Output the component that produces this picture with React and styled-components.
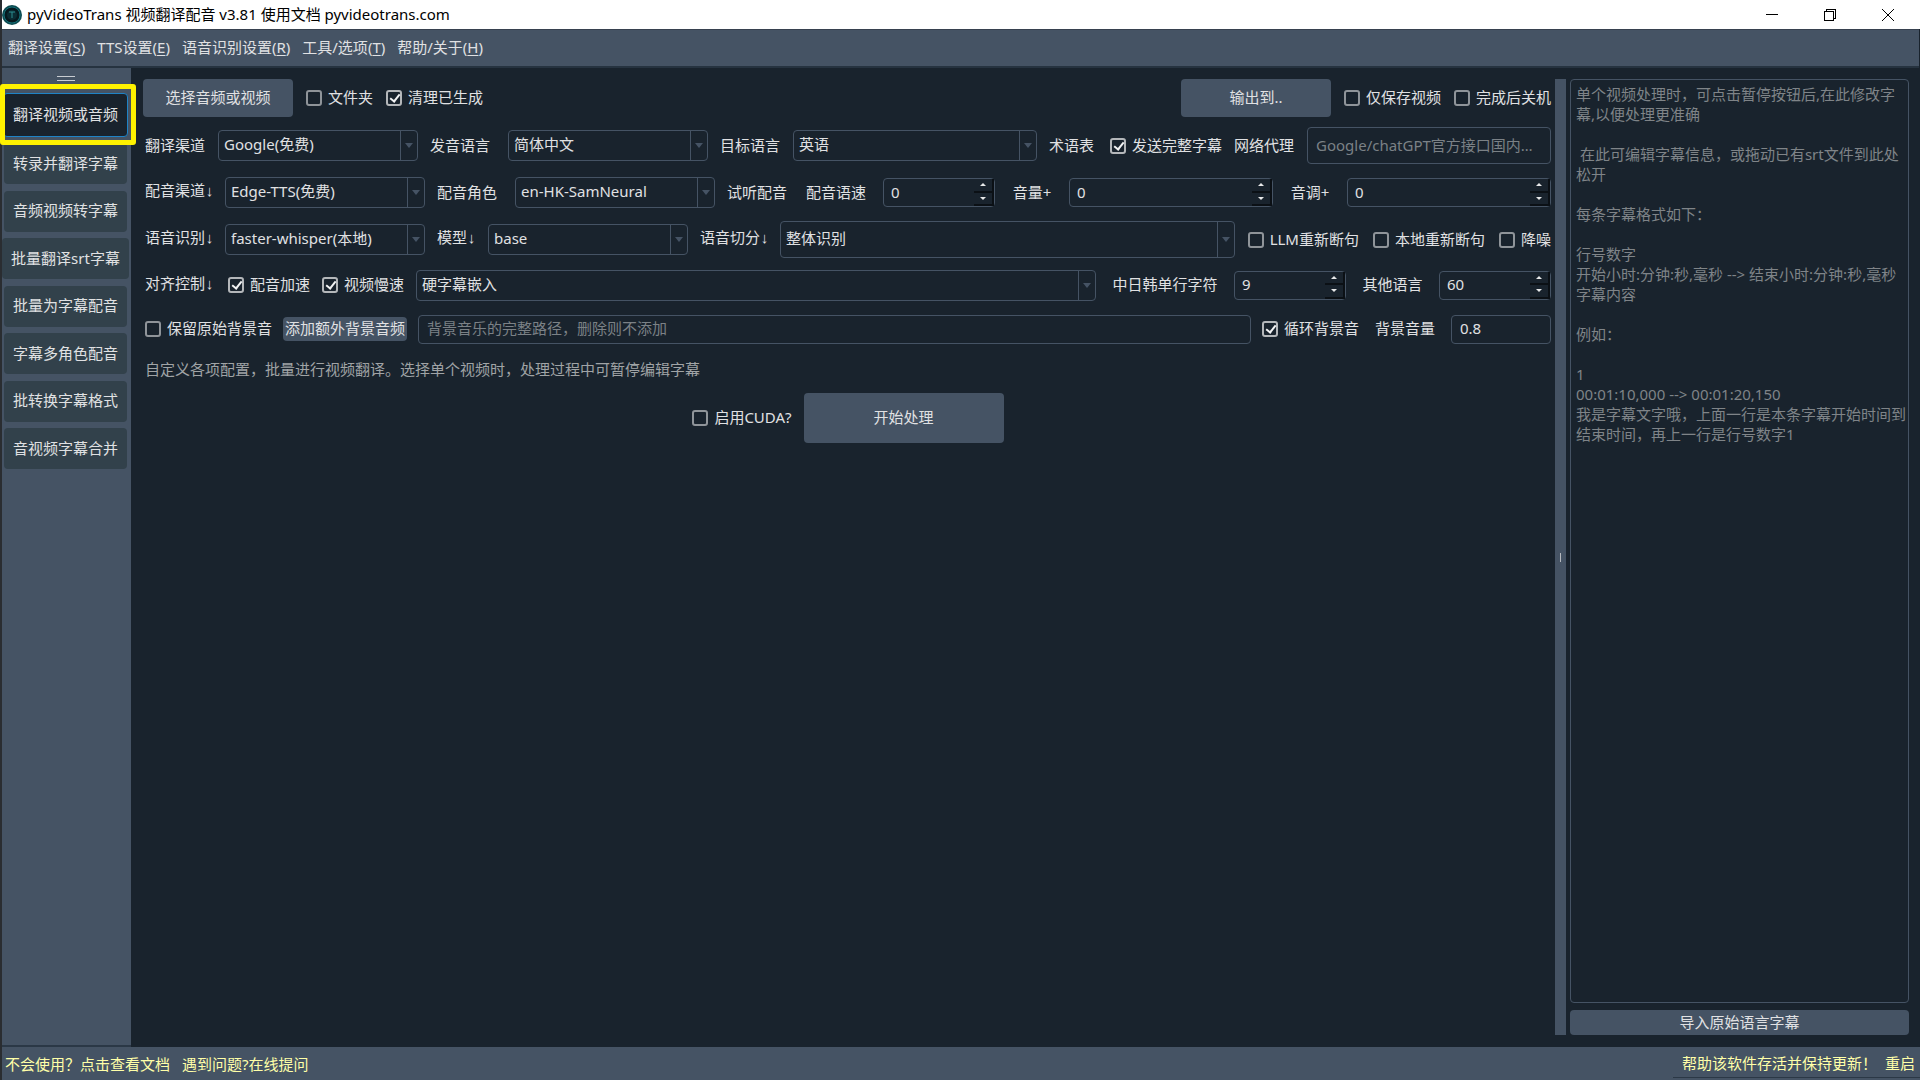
import React from 'react';
import styled, { createGlobalStyle } from 'styled-components';

const GlobalStyle = createGlobalStyle`
    * {
        box-sizing: border-box;
    }
    body {
        margin: 0;
        background: #19232d;
    }
    body, button, input, select, textarea {
        font-family: 'Noto Sans', 'Noto Sans CJK SC', sans-serif;
        font-size: 15px;
        line-height: 20px;
        color: #e0e1e3;
    }
    button, input, select, textarea {
        margin: 0;
        padding: 0;
        outline: none;
    }
`;

/* window */
const Window = styled.div`
    min-height: 100vh;
    display: flex;
    flex-direction: column;
    border-left: 2px solid #2a2d31;
    background: #19232d;
`;
const TitleBar = styled.header`
    height: 29px;
    display: flex;
    align-items: center;
    background: #fff;
    color: #000;
`;
const Title = styled.div`
    flex: 1;
    padding: 0 0 2px 5px;
    white-space: nowrap;
`;
const WindowButton = styled.button`
    width: 58px;
    height: 28px;
    display: flex;
    align-items: center;
    justify-content: center;
    border: 0;
    background: none;
`;
const WindowButtons = styled.div`
    display: flex;
    padding-right: 3px;
`;
const MenuBar = styled.nav`
    display: flex;
    gap: 12px;
    height: 39px;
    padding: 0 6px 2px;
    margin-right: 1px;
    align-items: center;
    background: #455364;
    border-top: 1px solid #37414f;
    border-bottom: 2px solid #263340;
`;
const MenuItem = styled.button`
    border: 0;
    background: none;
    white-space: nowrap;

    u {
        text-underline-offset: 2px;
    }
`;
const Body = styled.div`
    flex: 1;
    display: flex;
`;

/* sidebar */
const Sidebar = styled.aside`
    width: 129px;
    flex: none;
    padding: 8px 4px 0 2px;
    background: #455364;
    border-bottom: 2px solid #2b3846;
`;
const Grip = styled.div`
    width: 18px;
    height: 5px;
    margin: 0 auto 12px;
    border-top: 1px solid #c9cdd2;
    border-bottom: 1px solid #c9cdd2;
`;
const Current = styled.div`
    position: relative;
    margin: 0 -1px 6px;
`;
const Highlight = styled.div`
    position: absolute;
    z-index: 2;
    top: -9px;
    left: -3px;
    right: -8px;
    bottom: -8px;
    border: 5px solid #fff200;
    border-radius: 3px;
    pointer-events: none;
`;
const ToolList = styled.div`
    display: grid;
    height: 326px;
    grid-auto-rows: 41px;
    align-content: space-between;
`;
const ToolButton = styled.button`
    width: ${props => props.$active ? '100%' : 'auto'};
    height: ${props => props.$active ? '44px' : '41px'};
    margin: ${props => props.$wide ? '0 -2px' : '0'};
    padding-bottom: 2px;
    border: ${props => props.$active ? '1px solid #1f83c6' : '0'};
    border-radius: 4px;
    background: ${props => props.$active ? '#19232d' : '#32414b'};
    white-space: nowrap;
`;

/* settings form */
const Main = styled.main`
    flex: 1;
    min-width: 0;
    padding: 11px 4px 12px 12px;
    display: flex;
    flex-direction: column;
    gap: 10px;
`;
const Row = styled.div`
    display: flex;
    align-items: center;
    gap: ${props => props.$gap || '12px'};
    min-height: ${props => props.$height || '37px'};
    padding-left: ${props => props.$flush ? '0' : '2px'};
    justify-content: ${props => props.$center ? 'center' : 'flex-start'};
`;
const CheckGroup = styled.div`
    flex: none;
    display: flex;
    gap: 14px;
    padding-left: 1px;
`;
const Spacer = styled.div`
    flex: 1;
`;
const Label = styled.label`
    flex: none;
    width: ${props => props.$width || '61px'};
    padding-bottom: 2px;
    text-align: ${props => props.$center ? 'center' : 'left'};
    white-space: nowrap;
`;
const LinkButton = styled.button`
    flex: none;
    width: ${props => props.$width || '68px'};
    padding-bottom: 2px;
    border: 0;
    background: none;
    text-align: left;
    white-space: nowrap;
`;
/* the mono face has a narrow arrow */
const Arrow = styled.span`
    font-family: 'Liberation Mono', monospace;
`;
const Button = styled.button`
    flex: none;
    width: ${props => props.$width};
    height: ${props => props.$height};
    padding-bottom: 2px;
    border: 0;
    border-radius: 4px;
    background: #455364;
    white-space: nowrap;
`;
const CheckLabel = styled.label`
    flex: none;
    display: flex;
    align-items: center;
    gap: 6px;
    white-space: nowrap;

    span {
        padding-bottom: 2px;
    }
`;
const CheckBox = styled.input`
    appearance: none;
    width: 16px;
    height: 16px;
    border: 2px solid #8f9499;
    border-radius: 3px;
    background: #19232d;

    &:checked {
        border-color: #b4b7ba;
    }
    &:checked::after {
        content: '';
        display: block;
        width: 4px;
        height: 8px;
        margin: 0 0 0 4px;
        border: solid #f2f3f4;
        border-width: 0 2px 2px 0;
        transform: rotate(38deg);
    }
`;
const SelectBox = styled.div`
    flex: ${props => props.$grow ? '1 1 18px' : '0 0 200px'};
    min-width: 0;
    height: ${props => props.$tall ? '37px' : '31px'};
    display: grid;
    border: 1px solid #455364;
    border-radius: 4px;
`;
const Select = styled.select`
    grid-area: 1 / 1;
    width: 100%;
    appearance: none;
    border: 0;
    padding: 0 20px 3px 5px;
    background: transparent;

    option {
        background: #19232d;
    }
`;
const SelectArrow = styled.span`
    grid-area: 1 / 1;
    justify-self: end;
    width: 17px;
    display: flex;
    align-items: center;
    justify-content: center;
    border-left: 1px solid #455364;
    pointer-events: none;

    &::after {
        content: '';
        border: 4px solid transparent;
        border-top: 5px solid #455364;
        border-bottom: 0;
    }
`;
const TextInput = styled.input`
    flex: ${props => props.$width ? 'none' : '1 1 0'};
    width: ${props => props.$width || 'auto'};
    min-width: 0;
    height: ${props => props.$tall ? '37px' : '29px'};
    padding: 0 8px 2px;
    border: 1px solid #455364;
    border-radius: 4px;
    background: transparent;
    text-overflow: ellipsis;

    &::placeholder {
        color: #7b8186;
    }
`;
const SpinBox = styled.div`
    flex: ${props => props.$width ? 'none' : '1 1 0'};
    width: ${props => props.$width || 'auto'};
    min-width: 0;
    height: 29px;
    display: flex;
    border: 1px solid #455364;
    border-radius: 4px;
`;
const SpinInput = styled.input`
    flex: 1;
    min-width: 0;
    padding: 0 0 2px 7px;
    border: 0;
    background: transparent;
`;
const SpinButtons = styled.div`
    width: 20px;
    display: flex;
    flex-direction: column;
`;
const SpinButton = styled.button`
    flex: 1;
    display: flex;
    align-items: center;
    justify-content: center;
    border: solid #0b1015;
    border-width: 0 2px 2px 0;
    background: #19232d;

    &::after {
        content: '';
        border: 3px solid transparent;
        ${props => props.$up ? 'border-bottom-color' : 'border-top-color'}: #e8e9ea;
        ${props => props.$up ? 'border-top' : 'border-bottom'}-width: 0;
    }
`;
const Hint = styled.p`
    margin: 0;
    padding-left: 2px;
    line-height: 27px;
    color: #a0a4a6;
`;

/* subtitle panel */
const Splitter = styled.div`
    width: 11px;
    flex: none;
    margin: 11px 0 12px;
    display: flex;
    align-items: center;
    justify-content: center;
    background: #455364;

    &::after {
        content: '';
        width: 1px;
        height: 9px;
        background: #b5b9be;
    }
`;
const SidePanel = styled.section`
    width: 354px;
    flex: none;
    display: flex;
    flex-direction: column;
    gap: 7px;
    padding: 11px 11px 12px 4px;
`;
const Subtitles = styled.textarea`
    flex: 1;
    padding: 4px 0 5px 5px;
    border: 1px solid #455364;
    border-radius: 4px;
    background: transparent;
    resize: none;
    overflow: hidden;

    &::placeholder {
        color: #7f8488;
    }
`;

const StatusBar = styled.footer`
    height: 33px;
    display: flex;
    align-items: center;
    gap: 12px;
    padding: 0 0 0 3px;
    background: #455364;
`;
const StatusLink = styled.a`
    color: #ffffa8;
    text-decoration: none;
    white-space: nowrap;
`;
const StatusRight = styled.div`
    align-self: stretch;
    display: flex;
    align-items: center;
    gap: 8px;
    margin: 0 0 2px auto;
    padding: 2px 5px 0 9px;
    border-bottom: 1px solid #2b3846;
`;

const menus = [
    ['翻译设置', 'S'],
    ['TTS设置', 'E'],
    ['语音识别设置', 'R'],
    ['工具/选项', 'T'],
    ['帮助/关于', 'H'],
];

const tools = [
    { name: '转录并翻译字幕' },
    { name: '音频视频转字幕' },
    { name: '批量翻译srt字幕', wide: true },
    { name: '批量为字幕配音' },
    { name: '字幕多角色配音' },
    { name: '批转换字幕格式' },
    { name: '音视频字幕合并' },
];

const subtitleHelp = [
    '单个视频处理时，可点击暂停按钮后,在此修改字',
    '幕,以便处理更准确',
    '',
    ' 在此可编辑字幕信息，或拖动已有srt文件到此处',
    '松开',
    '',
    '每条字幕格式如下：',
    '',
    '行号数字',
    '开始小时:分钟:秒,毫秒 --> 结束小时:分钟:秒,毫秒',
    '字幕内容',
    '',
    '例如：',
    '',
    '1',
    '00:01:10,000 --> 00:01:20,150',
    '我是字幕文字哦，上面一行是本条字幕开始时间到',
    '结束时间，再上一行是行号数字1',
].join('\n');

const Check = ({ children, checked }) => (
    <CheckLabel>
        <CheckBox type="checkbox" defaultChecked={checked} />
        <span>{children}</span>
    </CheckLabel>
);

const HelpLink = ({ children, width }) => (
    <LinkButton $width={width}>{children}<Arrow>↓</Arrow></LinkButton>
);

const Combo = ({ id, label, value, grow, tall }) => (
    <SelectBox $grow={grow} $tall={tall}>
        <Select id={id} aria-label={label} defaultValue={value}>
            <option>{value}</option>
        </Select>
        <SelectArrow />
    </SelectBox>
);

const Spin = ({ id, initial, width }) => {
    const [value, setValue] = React.useState(initial);
    return (
        <SpinBox $width={width}>
            <SpinInput
                id={id}
                inputMode="numeric"
                value={value}
                onChange={e => setValue(Number(e.target.value) || 0)}
            />
            <SpinButtons>
                <SpinButton $up aria-label="增加" onClick={() => setValue(value + 1)} />
                <SpinButton aria-label="减少" onClick={() => setValue(value - 1)} />
            </SpinButtons>
        </SpinBox>
    );
};

const Logo = () => (
    <svg width="20" height="20" viewBox="0 0 20 20">
        <circle cx="10" cy="10" r="10" fill="#0d4a50" />
        <circle cx="10" cy="10" r="8" fill="#06191f" stroke="#127078" strokeWidth="1" />
        <circle cx="10" cy="10" r="5" fill="#0a2c33" />
        <path d="M7 7h6M10 7v6" stroke="#2b8c8f" strokeWidth="1" fill="none" />
    </svg>
);

const App = () => (
    <Window>
        <GlobalStyle />
        <TitleBar>
            <Logo />
            <Title>pyVideoTrans 视频翻译配音 v3.81 使用文档 pyvideotrans.com</Title>
            <WindowButtons>
                <WindowButton aria-label="最小化">
                    <svg width="12" height="12" shapeRendering="crispEdges">
                        <path d="M0 5.5h12" stroke="#000" />
                    </svg>
                </WindowButton>
                <WindowButton aria-label="还原">
                    <svg width="12" height="12" fill="none" stroke="#000" shapeRendering="crispEdges">
                        <path d="M.5 2.5h9v9h-9zM2.5 2.5v-2h9v9h-2" />
                    </svg>
                </WindowButton>
                <WindowButton aria-label="关闭">
                    <svg width="12" height="12" stroke="#000">
                        <path d="M0 0l12 12M12 0L0 12" />
                    </svg>
                </WindowButton>
            </WindowButtons>
        </TitleBar>
        <MenuBar>
            {menus.map(([name, key]) => (
                <MenuItem key={key}>{name}(<u>{key}</u>)</MenuItem>
            ))}
        </MenuBar>
        <Body>
            <Sidebar>
                <Grip />
                <Current>
                    <ToolButton $active>翻译视频或音频</ToolButton>
                    <Highlight />
                </Current>
                <ToolList>
                    {tools.map(tool => (
                        <ToolButton key={tool.name} $wide={tool.wide}>{tool.name}</ToolButton>
                    ))}
                </ToolList>
            </Sidebar>
            <Main>
                <Row $flush $gap="13px" $height="38px">
                    <Button $width="150px" $height="38px">选择音频或视频</Button>
                    <Check>文件夹</Check>
                    <Check checked>清理已生成</Check>
                    <Spacer />
                    <Button $width="150px" $height="38px">输出到..</Button>
                    <Check>仅保存视频</Check>
                    <Check>完成后关机</Check>
                </Row>
                <Row>
                    <Label htmlFor="channel">翻译渠道</Label>
                    <Combo id="channel" value="Google(免费)" />
                    <Label htmlFor="source" $width="66px">发音语言</Label>
                    <Combo id="source" value="简体中文" />
                    <Label htmlFor="target">目标语言</Label>
                    <Combo id="target" value="英语" grow />
                    <LinkButton $width="49px">术语表</LinkButton>
                    <Check checked>发送完整字幕</Check>
                    <Label htmlFor="proxy">网络代理</Label>
                    <TextInput id="proxy" $tall placeholder="Google/chatGPT官方接口国内无法访问，需设置代理" />
                </Row>
                <Row>
                    <HelpLink>配音渠道</HelpLink>
                    <Combo label="配音渠道" value="Edge-TTS(免费)" />
                    <Label htmlFor="role" $width="66px">配音角色</Label>
                    <Combo id="role" value="en-HK-SamNeural" />
                    <LinkButton $width="67px">试听配音</LinkButton>
                    <Label htmlFor="rate" $width="65px">配音语速</Label>
                    <Spin id="rate" initial={0} width="112px" />
                    <Label htmlFor="volume" $width="50px" $center>音量+</Label>
                    <Spin id="volume" initial={0} />
                    <Label htmlFor="pitch" $width="50px" $center>音调+</Label>
                    <Spin id="pitch" initial={0} />
                </Row>
                <Row>
                    <HelpLink>语音识别</HelpLink>
                    <Combo label="语音识别" value="faster-whisper(本地)" />
                    <HelpLink width="39px">模型</HelpLink>
                    <Combo label="模型" value="base" />
                    <HelpLink>语音切分</HelpLink>
                    <Combo label="语音切分" value="整体识别" grow tall />
                    <CheckGroup>
                        <Check>LLM重新断句</Check>
                        <Check>本地重新断句</Check>
                        <Check>降噪</Check>
                    </CheckGroup>
                </Row>
                <Row $height="34px">
                    <HelpLink width="71px">对齐控制</HelpLink>
                    <Check checked>配音加速</Check>
                    <Check checked>视频慢速</Check>
                    <Combo label="字幕嵌入" value="硬字幕嵌入" grow />
                    <Label htmlFor="cjk" $width="114px" $center>中日韩单行字符</Label>
                    <Spin id="cjk" initial={9} width="112px" />
                    <Label htmlFor="other" $width="69px" $center>其他语言</Label>
                    <Spin id="other" initial={60} width="112px" />
                </Row>
                <Row $height="34px" $gap="11px">
                    <Check>保留原始背景音</Check>
                    <Button $width="124px" $height="24px">添加额外背景音频</Button>
                    <TextInput aria-label="背景音乐" placeholder="背景音乐的完整路径，删除则不添加" />
                    <Check checked>循环背景音</Check>
                    <Label htmlFor="bgm" $width="70px" $center>背景音量</Label>
                    <TextInput id="bgm" $width="100px" defaultValue="0.8" />
                </Row>
                <Hint>自定义各项配置，批量进行视频翻译。选择单个视频时，处理过程中可暂停编辑字幕</Hint>
                <Row $center $height="50px">
                    <Check>启用CUDA?</Check>
                    <Button $width="200px" $height="50px">开始处理</Button>
                </Row>
            </Main>
            <Splitter />
            <SidePanel>
                <Subtitles aria-label="字幕编辑" placeholder={subtitleHelp} />
                <Button $width="100%" $height="25px">导入原始语言字幕</Button>
            </SidePanel>
        </Body>
        <StatusBar>
            <StatusLink href="#docs">不会使用？点击查看文档</StatusLink>
            <StatusLink href="#ask">遇到问题?在线提问</StatusLink>
            <StatusRight>
                <StatusLink href="#donate">帮助该软件存活并保持更新！</StatusLink>
                <StatusLink href="#restart">重启</StatusLink>
            </StatusRight>
        </StatusBar>
    </Window>
);

export default App;
